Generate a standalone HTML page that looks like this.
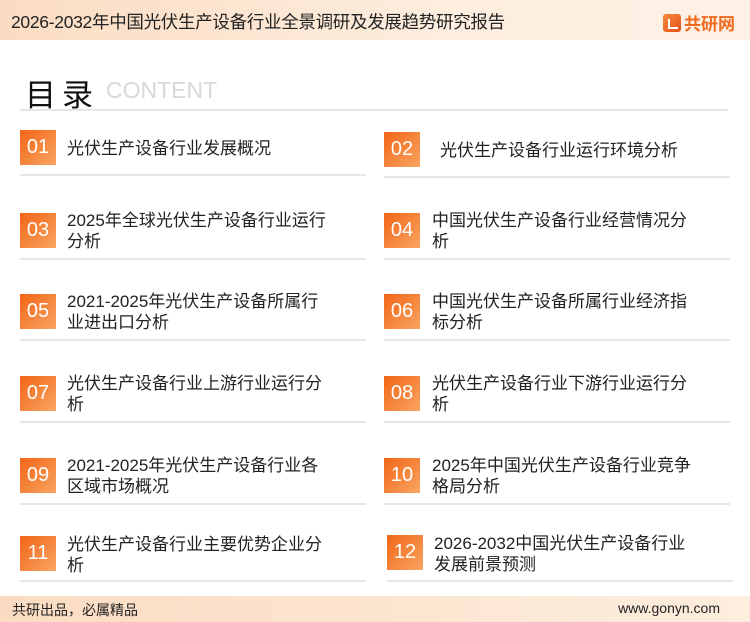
<!DOCTYPE html>
<html><head><meta charset="utf-8">
<style>
*{margin:0;padding:0;box-sizing:border-box}
body{width:750px;height:622px;position:relative;background:#fff;font-family:"Liberation Sans","Noto Sans CJK SC",sans-serif;color:#222;overflow:hidden}
.hdr{position:absolute;left:0;top:0;width:750px;height:40px;background:linear-gradient(90deg,#fbdcc2,#fdeedf 60%,#fdf1e6)}
.hdr .t{position:absolute;left:11px;top:9px;font-size:17.5px;color:#222;letter-spacing:-0.3px}
.logo{position:absolute;left:663px;top:10px;font-size:17px;font-weight:bold;color:#f06a1e;display:flex;align-items:center}
.logo i{display:inline-block;width:18px;height:18px;border-radius:3px;background:linear-gradient(135deg,#f58a3c,#e8501a);margin-right:3px;position:relative}
.logo i:after{content:"";position:absolute;left:5px;top:5px;width:8px;height:8px;border:2px solid #fff;border-top:none;border-right:none}
.ttl{position:absolute;left:25px;top:70px;font-size:31px;color:#111;letter-spacing:6px}
.en{position:absolute;left:106px;top:77px;font-size:23px;color:#d8d8d8}
.hl{position:absolute;left:20px;top:109px;width:708px;height:2px;background:#e6e6e6}
.box{position:absolute;width:36px;height:35px;background:linear-gradient(135deg,#f26516,#f9a562);color:#fff;font-size:20px;text-align:center;line-height:35px}
.tx{position:absolute;font-size:17px;line-height:21px;color:#222}
.ln{position:absolute;height:2px;background:#e6e6e6;width:346px}
.ftr{position:absolute;left:0;top:596px;width:750px;height:26px;background:linear-gradient(90deg,#fbdcc2,#fdeede)}
.ftr .a{position:absolute;left:12px;top:4px;font-size:14px}
.ftr .b{position:absolute;right:30px;top:4px;font-size:14px}
</style></head><body>
<div class="hdr"><div class="t">2026-2032年中国光伏生产设备行业全景调研及发展趋势研究报告</div>
<div class="logo"><i></i>共研网</div></div>
<div class="ttl">目录</div><div class="en">CONTENT</div><div class="hl"></div>

<div class="box" style="left:20px;top:130px">01</div><div class="tx" style="left:67px;top:138px">光伏生产设备行业发展概况</div><div class="ln" style="left:20px;top:174px"></div>
<div class="box" style="left:384px;top:132px">02</div><div class="tx" style="left:440px;top:140px">光伏生产设备行业运行环境分析</div><div class="ln" style="left:384px;top:176px"></div>

<div class="box" style="left:20px;top:213px">03</div><div class="tx" style="left:67px;top:210px">2025年全球光伏生产设备行业运行<br>分析</div><div class="ln" style="left:20px;top:258px"></div>
<div class="box" style="left:384px;top:213px">04</div><div class="tx" style="left:432px;top:210px">中国光伏生产设备行业经营情况分<br>析</div><div class="ln" style="left:384px;top:258px"></div>

<div class="box" style="left:20px;top:294px">05</div><div class="tx" style="left:67px;top:291px">2021-2025年光伏生产设备所属行<br>业进出口分析</div><div class="ln" style="left:20px;top:339px"></div>
<div class="box" style="left:384px;top:294px">06</div><div class="tx" style="left:432px;top:291px">中国光伏生产设备所属行业经济指<br>标分析</div><div class="ln" style="left:384px;top:339px"></div>

<div class="box" style="left:20px;top:376px">07</div><div class="tx" style="left:67px;top:373px">光伏生产设备行业上游行业运行分<br>析</div><div class="ln" style="left:20px;top:421px"></div>
<div class="box" style="left:384px;top:376px">08</div><div class="tx" style="left:432px;top:373px">光伏生产设备行业下游行业运行分<br>析</div><div class="ln" style="left:384px;top:421px"></div>

<div class="box" style="left:20px;top:458px">09</div><div class="tx" style="left:67px;top:455px">2021-2025年光伏生产设备行业各<br>区域市场概况</div><div class="ln" style="left:20px;top:503px"></div>
<div class="box" style="left:384px;top:458px">10</div><div class="tx" style="left:432px;top:455px">2025年中国光伏生产设备行业竞争<br>格局分析</div><div class="ln" style="left:384px;top:503px"></div>

<div class="box" style="left:20px;top:536px">11</div><div class="tx" style="left:67px;top:534px">光伏生产设备行业主要优势企业分<br>析</div><div class="ln" style="left:20px;top:580px"></div>
<div class="box" style="left:387px;top:535px">12</div><div class="tx" style="left:434px;top:533px">2026-2032中国光伏生产设备行业<br>发展前景预测</div><div class="ln" style="left:387px;top:580px"></div>

<div class="ftr"><div class="a">共研出品，必属精品</div><div class="b">www.gonyn.com</div></div>
</body></html>
